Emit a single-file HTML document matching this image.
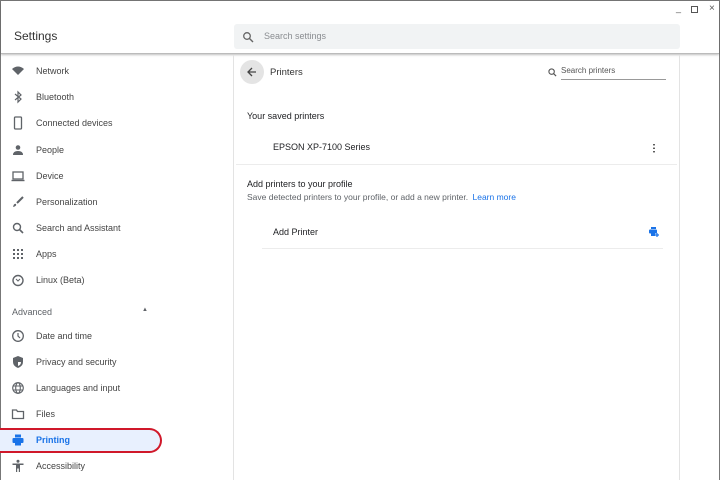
<!DOCTYPE html>
<html><head><style>
*{margin:0;padding:0;box-sizing:border-box}
body{width:720px;height:480px;overflow:hidden;background:#fff;font-family:"Liberation Sans",sans-serif;position:relative;color:#3c4043}
.frame{position:absolute;inset:0;border:1px solid #777;border-bottom:none}
.hdr{position:absolute;left:1px;top:1px;width:718px;height:53px;background:#fff;border-bottom:1px solid #bbb;box-shadow:0 1px 2px rgba(0,0,0,.25)}
.title{position:absolute;left:13px;top:28px;font-size:12px;color:#333}
.sb{position:absolute;left:233px;top:23px;width:446px;height:25px;background:#f1f3f4;border-radius:3px}
.sb span{position:absolute;left:30px;top:7px;font-size:9px;color:#8a8d91}
.wc{position:absolute;top:4px;font-size:9px;color:#555}
.card{position:absolute;left:233px;top:55px;width:447px;height:425px;border-left:1px solid #e3e3e3;border-right:1px solid #e3e3e3}
.item{position:absolute;left:0;height:24px;width:162px;font-size:9px;color:#444}
.item .t{position:absolute;left:36px;top:7px}
.item svg{position:absolute;left:11px;top:5px}
.hl{background:#e8f0fe;border:2px solid #d0182a;border-left:none;border-radius:0 13px 13px 0;color:#1a73e8}
.hl .t{color:#1a73e8;font-weight:bold;top:5px}
.hl svg{top:3px}
.txt{position:absolute;font-size:9px;color:#202124}
.line{position:absolute;height:1px;background:#ececec}
</style></head><body>
<div class="frame"></div>
<div class="hdr">
<div class="title">Settings</div>
<div class="sb"><svg width="12" height="12" style="position:absolute;left:8px;top:7px" viewBox="0 0 12 12"><circle cx="5" cy="5" r="3.3" fill="none" stroke="#666" stroke-width="1.3"/><path d="M7.5 7.5L11 11" stroke="#666" stroke-width="1.4"/></svg><span>Search settings</span></div>
<div class="wc" style="left:675px;top:2px">_</div>
<div style="position:absolute;left:690px;top:5px;width:7px;height:7px;border:1px solid #555"></div>
<div class="wc" style="left:708px;top:2px;font-size:10px">×</div>
</div>
<div class="item" style="top:59px"><svg width="14" height="14" viewBox="0 0 14 14"><path d="M1 5Q7 0 13 5L7 11Z" fill="#5f6368"/></svg><span class="t">Network</span></div>
<div class="item" style="top:85px"><svg width="14" height="14" viewBox="0 0 14 14"><path d="M4 4L10 9L7 12V2L10 5L4 10" fill="none" stroke="#5f6368" stroke-width="1.2"/></svg><span class="t">Bluetooth</span></div>
<div class="item" style="top:111px"><svg width="14" height="14" viewBox="0 0 14 14"><rect x="3.5" y="1" width="7" height="12" rx="1" fill="none" stroke="#5f6368" stroke-width="1.3"/></svg><span class="t">Connected devices</span></div>
<div class="item" style="top:138px"><svg width="14" height="14" viewBox="0 0 14 14"><circle cx="7" cy="4.5" r="2.3" fill="#5f6368"/><path d="M2 12Q2 8 7 8Q12 8 12 12Z" fill="#5f6368"/></svg><span class="t">People</span></div>
<div class="item" style="top:164px"><svg width="14" height="14" viewBox="0 0 14 14"><rect x="2" y="3" width="10" height="7" fill="none" stroke="#5f6368" stroke-width="1.3"/><path d="M0.5 11.5H13.5" stroke="#5f6368" stroke-width="1.4"/></svg><span class="t">Device</span></div>
<div class="item" style="top:190px"><svg width="14" height="14" viewBox="0 0 14 14"><path d="M12 2L6 8" stroke="#5f6368" stroke-width="2"/><path d="M2 12Q3 8 5 9Q6 11 2 12Z" fill="#5f6368"/></svg><span class="t">Personalization</span></div>
<div class="item" style="top:216px"><svg width="14" height="14" viewBox="0 0 14 14"><circle cx="6" cy="6" r="3.5" fill="none" stroke="#5f6368" stroke-width="1.4"/><path d="M8.5 8.5L12 12" stroke="#5f6368" stroke-width="1.6"/></svg><span class="t">Search and Assistant</span></div>
<div class="item" style="top:242px"><svg width="14" height="14" viewBox="0 0 14 14" fill="#5f6368"><rect x="2" y="2" width="2" height="2"/><rect x="6" y="2" width="2" height="2"/><rect x="10" y="2" width="2" height="2"/><rect x="2" y="6" width="2" height="2"/><rect x="6" y="6" width="2" height="2"/><rect x="10" y="6" width="2" height="2"/><rect x="2" y="10" width="2" height="2"/><rect x="6" y="10" width="2" height="2"/><rect x="10" y="10" width="2" height="2"/></svg><span class="t">Apps</span></div>
<div class="item" style="top:268px"><svg width="14" height="14" viewBox="0 0 14 14"><circle cx="7" cy="7.5" r="5" fill="none" stroke="#5f6368" stroke-width="1.4"/><path d="M5 6L7 8L9 6" fill="none" stroke="#5f6368"/></svg><span class="t">Linux (Beta)</span></div>
<div class="txt" style="left:12px;top:307px;color:#5f6368">Advanced</div>
<div class="txt" style="left:142px;top:307px;font-size:6px;color:#5f6368">▲</div>
<div class="item" style="top:324px"><svg width="14" height="14" viewBox="0 0 14 14"><circle cx="7" cy="7" r="5.3" fill="none" stroke="#5f6368" stroke-width="1.3"/><path d="M7 4V7L9 9" fill="none" stroke="#5f6368" stroke-width="1.2"/></svg><span class="t">Date and time</span></div>
<div class="item" style="top:350px"><svg width="14" height="14" viewBox="0 0 14 14"><path d="M7 1L12 3V7Q12 11 7 13Q2 11 2 7V3Z" fill="#5f6368"/><path d="M7 3V11Q10 10 10 7H7Z" fill="#fff"/></svg><span class="t">Privacy and security</span></div>
<div class="item" style="top:376px"><svg width="14" height="14" viewBox="0 0 14 14" fill="none" stroke="#5f6368" stroke-width="1.1"><circle cx="7" cy="7" r="5.3"/><ellipse cx="7" cy="7" rx="2.3" ry="5.3"/><path d="M2 5H12M2 9H12"/></svg><span class="t">Languages and input</span></div>
<div class="item" style="top:402px"><svg width="14" height="14" viewBox="0 0 14 14"><path d="M1.5 3H5.5L6.5 4.5H12.5V11.5H1.5Z" fill="none" stroke="#5f6368" stroke-width="1.3"/></svg><span class="t">Files</span></div>
<div class="item hl" style="top:428px;height:25px"><svg width="14" height="14" viewBox="0 0 14 14" fill="#1a73e8"><rect x="4" y="1.5" width="6" height="3"/><rect x="1.5" y="5" width="11" height="5" rx="1"/><rect x="4" y="9" width="6" height="3.5"/></svg><span class="t">Printing</span></div>
<div class="item" style="top:454px"><svg width="14" height="14" viewBox="0 0 14 14" fill="#5f6368"><circle cx="7" cy="2.2" r="1.5"/><path d="M1.5 4.5H12.5V6H9V13H7.8V9.5H6.2V13H5V6H1.5Z"/></svg><span class="t">Accessibility</span></div>
<div class="card"></div>
<div style="position:absolute;left:240px;top:60px;width:24px;height:24px;border-radius:50%;background:#e4e4e4"></div>
<svg width="12" height="12" style="position:absolute;left:246px;top:66px" viewBox="0 0 12 12"><path d="M10 6H2M6 2L2 6L6 10" fill="none" stroke="#444" stroke-width="1.3"/></svg>
<div class="txt" style="left:270px;top:67px;font-size:9.5px;color:#333">Printers</div>
<svg width="9" height="9" style="position:absolute;left:548px;top:68px" viewBox="0 0 10 10"><circle cx="4" cy="4" r="3" fill="none" stroke="#555" stroke-width="1.2"/><path d="M6 6L9 9" stroke="#555" stroke-width="1.3"/></svg>
<div class="txt" style="left:561px;top:66px;font-size:8px;color:#555">Search printers</div>
<div style="position:absolute;left:561px;top:79px;width:105px;height:1px;background:#999"></div>
<div class="txt" style="left:247px;top:111px">Your saved printers</div>
<div class="txt" style="left:273px;top:142px">EPSON XP-7100 Series</div>
<div style="position:absolute;left:653px;top:143px;width:2px;height:10px;background:radial-gradient(circle,#444 0.8px,transparent 1px) 0 0/2px 3.5px"></div>
<div class="line" style="left:236px;top:164px;width:441px"></div>
<div class="txt" style="left:247px;top:179px">Add printers to your profile</div>
<div class="txt" style="left:247px;top:192px;color:#5f6368;font-size:8.5px">Save detected printers to your profile, or add a new printer. <span style="color:#1a73e8;margin-left:2px">Learn more</span></div>
<div class="txt" style="left:273px;top:227px">Add Printer</div>
<svg width="12" height="12" style="position:absolute;left:648px;top:226px" viewBox="0 0 12 12" fill="#1a73e8"><rect x="3" y="1" width="5" height="2"/><rect x="1" y="3.5" width="8" height="4" rx="1"/><rect x="3" y="7" width="4" height="3"/><path d="M9 7V11M7 9H11" stroke="#1a73e8" stroke-width="1.2"/></svg>
<div class="line" style="left:262px;top:248px;width:401px"></div>
</body></html>
